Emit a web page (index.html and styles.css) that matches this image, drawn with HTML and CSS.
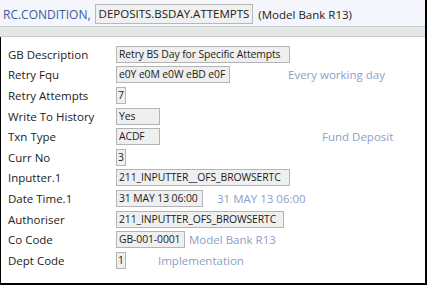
FILE: index.html
```html
<!DOCTYPE html>
<html lang="en">
<head>
  <meta charset="UTF-8" />
  <title>RC.CONDITION</title>
  <link rel="stylesheet" href="styles.css">
</head>
<body>
  <div class="frame">
    <header class="title">
      <span class="app">RC.CONDITION,</span>
      <span class="record">DEPOSITS.BSDAY.ATTEMPTS</span>
      <span class="company">(Model Bank R13)</span>
    </header>
    <div class="band"></div>

    <div class="content">
      <div class="row">
        <span class="label">GB Description</span>
        <span class="val w-desc">Retry BS Day for Specific Attempts</span>
      </div>
      <div class="row">
        <span class="label">Retry Fqu</span>
        <span class="val w-fqu">e0Y e0M e0W eBD e0F</span>
        <span class="enri enri-fqu">Every working day</span>
      </div>
      <div class="row">
        <span class="label">Retry Attempts</span>
        <span class="val w-one">7</span>
      </div>
      <div class="row">
        <span class="label">Write To History</span>
        <span class="val w-short">Yes</span>
      </div>
      <div class="row">
        <span class="label">Txn Type</span>
        <span class="val w-short">ACDF</span>
        <span class="enri enri-txn">Fund Deposit</span>
      </div>
      <div class="row">
        <span class="label">Curr No</span>
        <span class="val w-one">3</span>
      </div>
      <div class="row">
        <span class="label">Inputter.1</span>
        <span class="val w-desc">211_INPUTTER__OFS_BROWSERTC</span>
      </div>
      <div class="row">
        <span class="label">Date Time.1</span>
        <span class="val w-date">31 MAY 13 06:00</span>
        <span class="enri enri-date">31 MAY 13 06:00</span>
      </div>
      <div class="row">
        <span class="label">Authoriser</span>
        <span class="val w-auth">211_INPUTTER_OFS_BROWSERTC</span>
      </div>
      <div class="row">
        <span class="label">Co Code</span>
        <span class="val w-co">GB-001-0001</span>
        <span class="enri enri-co">Model Bank R13</span>
      </div>
      <div class="row">
        <span class="label">Dept Code</span>
        <span class="val w-one">1</span>
        <span class="enri enri-dept">Implementation</span>
      </div>
    </div>
  </div>
</body>
</html>
```

FILE: styles.css
```css
* {
  box-sizing: border-box;
}

body {
  margin: 0;
  width: 427px;
  height: 285px;
  background-color: #ffffff;
  font-family: 'Open Sans', sans-serif;
  color: #1c1c1c;
  overflow: hidden;
}

.frame {
  height: 285px;
  border-right: 2px solid #000;
  border-bottom: 2px solid #000;
}

.title {
  display: flex;
  align-items: center;
  height: 27px;
  padding: 2px 0 0 3px;
  background-color: #f4f6fc;
  border-bottom: 1px solid #c3cad2;
  font-size: 12px;
  white-space: nowrap;
}

.app {
  color: #3b5b9b;
  font-size: 12px;
}

.record {
  margin-left: 4px;
  padding: 0 3px;
  height: 20px;
  line-height: 18px;
  background-color: #f0f0f0;
  border: 1px solid #b8b8b8;
  color: #202020;
  font-size: 11.5px;
}

.company {
  margin-left: 5px;
  color: #202020;
  font-size: 11.5px;
}

.band {
  height: 10px;
  background-color: #e3e8e2;
  border-bottom: 1px solid #c5ccc5;
}

.content {
  height: 246px;
  padding: 7px 0 0 7px;
  border-left: 1px solid #000;
}

.row {
  display: flex;
  align-items: center;
  height: 20.6px;
  font-size: 11.5px;
  white-space: nowrap;
}

.label {
  width: 108px;
  flex-shrink: 0;
}

.val {
  height: 17px;
  line-height: 15px;
  padding: 0 2px;
  background-color: #efefef;
  border: 1px solid #b4b4b4;
  font-size: 10.4px;
  letter-spacing: -0.1px;
  overflow: hidden;
}

.w-desc { width: 174px; }
.w-fqu { width: 114px; }
.w-one { width: 10px; padding: 0 1px; }
.w-short { width: 44px; }
.w-date { width: 87px; }
.w-auth { width: 168px; }
.w-co { width: 69px; }

.enri {
  color: #8e9ec4;
  font-size: 11.5px;
}

.enri-fqu { margin-left: 58px; }
.enri-txn { margin-left: 162px; }
.enri-date { margin-left: 14px; }
.enri-co { margin-left: 4px; }
.enri-dept { margin-left: 32px; }
```
